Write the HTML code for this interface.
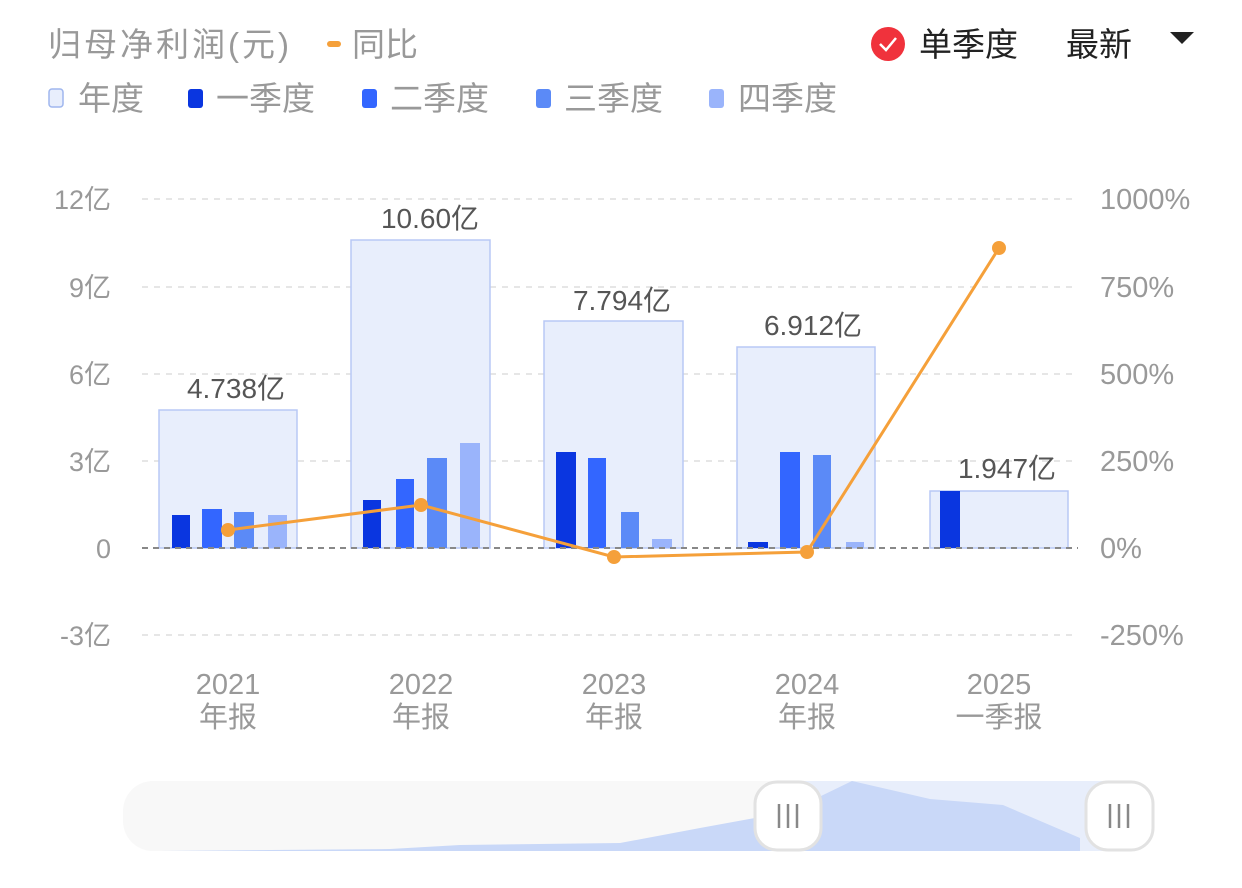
<!DOCTYPE html>
<html><head><meta charset="utf-8"><style>
body{margin:0;background:#fff;}
svg text{font-family:"Liberation Sans","Noto Sans CJK SC",sans-serif;}
</style></head><body>
<svg width="1242" height="883" viewBox="0 0 1242 883" xmlns="http://www.w3.org/2000/svg">
<text x="48" y="56" font-size="33" fill="#999" letter-spacing="3">归母净利润(元)</text>
<rect x="327" y="41" width="14" height="6" rx="3" fill="#f5a03a"/>
<text x="352" y="56" font-size="33" fill="#999">同比</text>
<circle cx="888" cy="44" r="17" fill="#f0323c"/>
<path d="M880 44 L886 50 L896 38" stroke="#fff" stroke-width="2.5" fill="none"/>
<text x="919" y="56" font-size="33" fill="#222">单季度</text>
<text x="1066" y="56" font-size="33" fill="#222">最新</text>
<path d="M1170 32 L1194 32 L1182 44 Z" fill="#222"/>
<rect x="49" y="89" width="14" height="18" rx="3" fill="#e8eefc" stroke="#9fb6ee" stroke-width="1.5"/>
<text x="78" y="110" font-size="33" fill="#999">年度</text>
<rect x="188" y="89" width="15" height="19" rx="3" fill="#0a36e0"/>
<text x="216" y="110" font-size="33" fill="#999">一季度</text>
<rect x="362" y="89" width="15" height="19" rx="3" fill="#3366ff"/>
<text x="390" y="110" font-size="33" fill="#999">二季度</text>
<rect x="536" y="89" width="15" height="19" rx="3" fill="#5b8af7"/>
<text x="564" y="110" font-size="33" fill="#999">三季度</text>
<rect x="709" y="89" width="15" height="19" rx="3" fill="#9ab4fb"/>
<text x="738" y="110" font-size="33" fill="#999">四季度</text>
<g stroke="#e6e6e6" stroke-width="2" stroke-dasharray="6,6">
<line x1="142" y1="199" x2="1078" y2="199"/><line x1="142" y1="287" x2="1078" y2="287"/>
<line x1="142" y1="374" x2="1078" y2="374"/><line x1="142" y1="461" x2="1078" y2="461"/>
<line x1="142" y1="635" x2="1078" y2="635"/>
</g>
<g font-size="27" fill="#999" text-anchor="end">
<text x="111" y="209">12亿</text><text x="111" y="297">9亿</text><text x="111" y="384">6亿</text>
<text x="111" y="471">3亿</text><text x="111" y="558">0</text><text x="111" y="645">-3亿</text>
</g>
<g font-size="29" fill="#999">
<text x="1100" y="209">1000%</text><text x="1100" y="297">750%</text><text x="1100" y="384">500%</text>
<text x="1100" y="471">250%</text><text x="1100" y="558">0%</text><text x="1100" y="645">-250%</text>
</g>
<g fill="#e8eefc" stroke="#b8c8f5" stroke-width="1.5">
<rect x="159" y="410" width="138" height="138"/><rect x="351" y="240" width="139" height="308"/>
<rect x="544" y="321" width="139" height="227"/><rect x="737" y="347" width="138" height="201"/>
<rect x="930" y="491" width="138" height="57"/>
</g>
<g fill="#0a36e0"><rect x="172" y="515" width="18" height="33"/><rect x="363" y="500" width="18" height="48"/><rect x="556" y="452" width="20" height="96"/><rect x="748" y="542" width="20" height="6"/><rect x="940" y="491" width="20" height="57"/></g>
<g fill="#3366ff"><rect x="202" y="509" width="20" height="39"/><rect x="396" y="479" width="18" height="69"/><rect x="588" y="458" width="18" height="90"/><rect x="780" y="452" width="20" height="96"/></g>
<g fill="#5b8af7"><rect x="234" y="512" width="20" height="36"/><rect x="427" y="458" width="20" height="90"/><rect x="621" y="512" width="18" height="36"/><rect x="813" y="455" width="18" height="93"/></g>
<g fill="#9ab4fb"><rect x="268" y="515" width="19" height="33"/><rect x="460" y="443" width="20" height="105"/><rect x="652" y="539" width="20" height="9"/><rect x="846" y="542" width="18" height="6"/></g>
<line x1="142" y1="548" x2="1078" y2="548" stroke="#888" stroke-width="2" stroke-dasharray="6,5"/>
<g font-size="28" fill="#555" text-anchor="middle">
<text x="236" y="398">4.738亿</text><text x="430" y="228">10.60亿</text><text x="622" y="310">7.794亿</text>
<text x="813" y="335">6.912亿</text><text x="1007" y="478">1.947亿</text>
</g>
<polyline points="228,530 421,505 614,557 807,552 999,248" fill="none" stroke="#f5a03a" stroke-width="3"/>
<g fill="#f5a03a"><circle cx="228" cy="530" r="7"/><circle cx="421" cy="505" r="7"/><circle cx="614" cy="557" r="7"/><circle cx="807" cy="552" r="7"/><circle cx="999" cy="248" r="7"/></g>
<g font-size="29" fill="#999" text-anchor="middle">
<text x="228" y="694">2021</text><text x="228" y="727">年报</text>
<text x="421" y="694">2022</text><text x="421" y="727">年报</text>
<text x="614" y="694">2023</text><text x="614" y="727">年报</text>
<text x="807" y="694">2024</text><text x="807" y="727">年报</text>
<text x="999" y="694">2025</text><text x="999" y="727">一季报</text>
</g>
<rect x="123" y="781" width="1029" height="70" rx="30" fill="#f8f8f8"/>
<rect x="788" y="781" width="330" height="70" fill="#e8eefb"/>
<path d="M160 851 L390 849 L460 845 L620 843 L700 828 L788 812 L852 781 L930 799 L1003 805 L1080 838 L1080 851 Z" fill="#c9d8f8"/>
<rect x="755" y="782" width="66" height="68" rx="22" fill="#fff" stroke="#e2e2e2" stroke-width="3"/>
<rect x="1086" y="782" width="67" height="68" rx="22" fill="#fff" stroke="#e2e2e2" stroke-width="3"/>
<g stroke="#888" stroke-width="2.5">
<line x1="779" y1="804" x2="779" y2="828"/><line x1="788" y1="804" x2="788" y2="828"/><line x1="797" y1="804" x2="797" y2="828"/>
<line x1="1110" y1="804" x2="1110" y2="828"/><line x1="1119" y1="804" x2="1119" y2="828"/><line x1="1128" y1="804" x2="1128" y2="828"/>
</g>
</svg>
</body></html>
